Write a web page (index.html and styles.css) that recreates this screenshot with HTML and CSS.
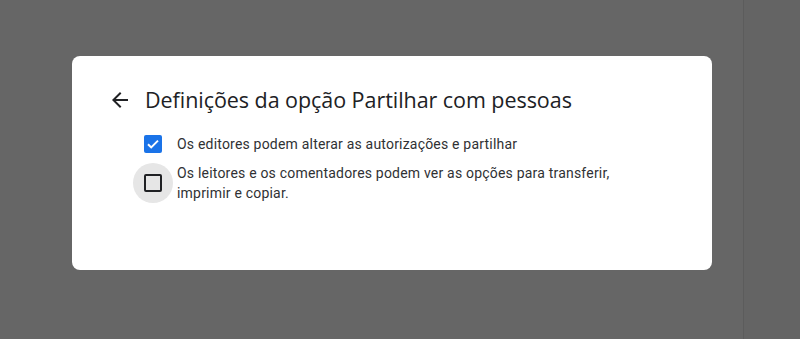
FILE: index.html
```html
<!DOCTYPE html>
<html lang="pt">
<head>
<meta charset="utf-8">
<link rel="stylesheet" href="styles.css">
</head>
<body>
<div class="screen">
  <div class="stage">
    <div class="card">
      <div class="header">
        <span class="back">
          <svg width="24" height="24" viewBox="0 0 24 24"><path d="M20 11H7.83l5.59-5.59L12 4l-8 8 8 8 1.41-1.41L7.83 13H20v-2z" fill="#202124"/></svg>
        </span>
        <h1 class="title">Definições da opção Partilhar com pessoas</h1>
      </div>
      <div class="options">
        <div class="option">
          <span class="box-wrap">
            <span class="box checked">
              <svg width="18" height="18" viewBox="0 0 18 18"><path d="M4 9.2l3.2 3.2L14 5.6" fill="none" stroke="#fff" stroke-width="2"/></svg>
            </span>
          </span>
          <span class="label">Os editores podem alterar as autorizações e partilhar</span>
        </div>
        <div class="option">
          <span class="box-wrap halo">
            <span class="box"></span>
          </span>
          <span class="label">Os leitores e os comentadores podem ver as opções para transferir,<br>imprimir e copiar.</span>
        </div>
      </div>
    </div>
  </div>
  <div class="side"></div>
</div>
</body>
</html>
```
FILE: styles.css
```css
html, body {
  margin: 0;
  padding: 0;
  background: #666666;
  font-family: Roboto, "Liberation Sans", sans-serif;
}
.screen {
  display: flex;
  width: 800px;
  height: 339px;
  overflow: hidden;
}
.stage {
  width: 743px;
  flex: none;
  padding: 56px 0 0 72px;
  box-sizing: border-box;
}
.side {
  flex: 1;
  border-left: 1px solid #5c5c5c;
  background: #646464;
}
.card {
  width: 640px;
  height: 214px;
  background: #ffffff;
  border-radius: 8px;
  box-sizing: border-box;
  padding: 30px 0 0 36px;
}
.header {
  display: flex;
  align-items: center;
  height: 28px;
}
.back {
  width: 24px;
  height: 24px;
  display: flex;
  margin-right: 13px;
}
.title {
  margin: 0;
  font-family: "Open Sans", Roboto, sans-serif;
  font-weight: 400;
  font-size: 21.5px;
  letter-spacing: -0.05px;
  color: #202124;
  line-height: 28px;
}
.options {
  margin-top: 20px;
  margin-left: 36px;
  display: flex;
  flex-direction: column;
  gap: 9px;
}
.option {
  display: flex;
  align-items: center;
}
.box-wrap {
  width: 40px;
  height: 40px;
  margin-left: -11px;
  border-radius: 50%;
  display: flex;
  align-items: center;
  justify-content: center;
  flex: none;
}
.option:first-child .box-wrap {
  height: 20px;
}
.halo {
  background: #e6e6e6;
}
.box {
  width: 18px;
  height: 18px;
  box-sizing: border-box;
  border: 2px solid #202124;
  border-radius: 2px;
  display: flex;
}
.box.checked {
  border: none;
  background: #1a73e8;
}
.label {
  margin-left: 4px;
  font-size: 14px;
  line-height: 20px;
  color: #303134;
  letter-spacing: 0.2px;
}
```
